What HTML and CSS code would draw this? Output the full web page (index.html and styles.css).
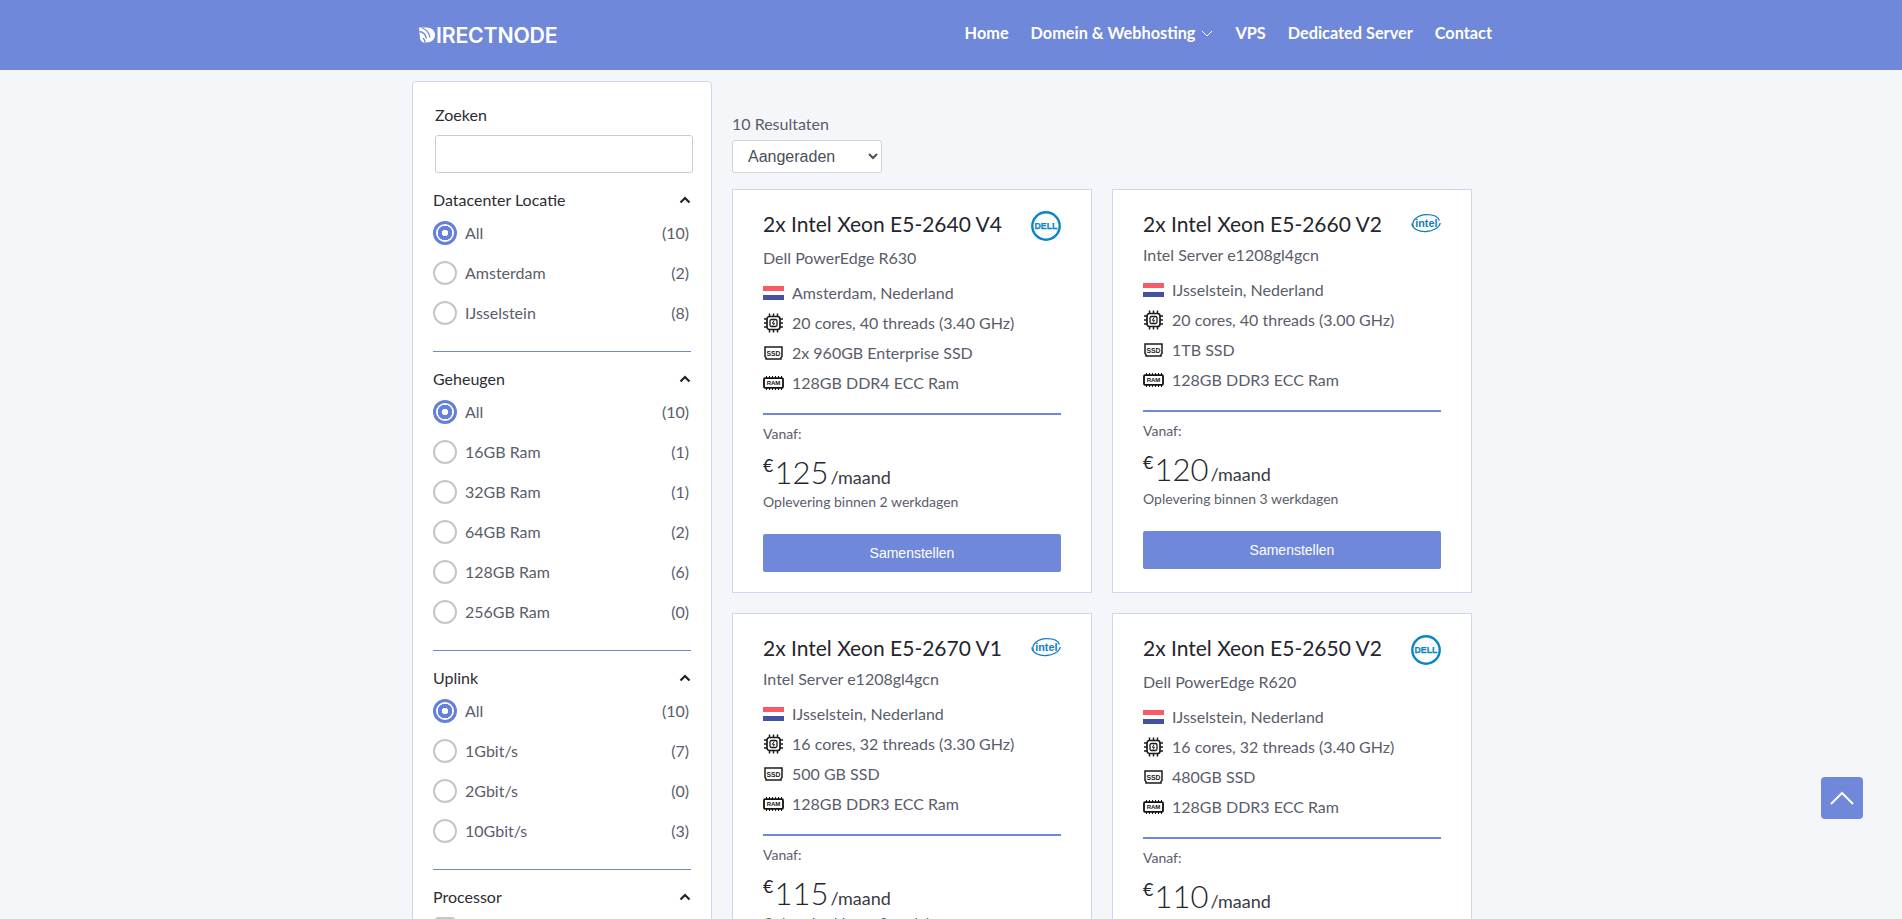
FILE: index.html
```html
<!DOCTYPE html>
<html lang="en">
<head>
    <meta charset="UTF-8">
    <meta name="viewport" content="width=device-width, initial-scale=1.0">
    <title>DirectNode - Dedicated Server</title>
    <link rel="stylesheet" href="styles.css">
</head>
<body>
    <svg class="sprites" width="0" height="0">
        <symbol id="chip" viewBox="0 0 20 20">
            <rect x="3.500" y="3.500" width="13" height="13" rx="2.500" fill="none" stroke="#1c1c1c" stroke-width="1.700"/>
            <rect x="6.500" y="6.500" width="7" height="7" rx="1.500" fill="none" stroke="#1c1c1c" stroke-width="1.300"/>
            <path d="M10.600 7.500 8.800 10.300h2.200l-1.400 2.200" fill="none" stroke="#1c1c1c" stroke-width="1"/>
            <path d="M6 .5v3M10 .5v3M14 .5v3M6 16.500v3M10 16.500v3M14 16.500v3M.5 6h3M.5 10h3M.5 14h3M16.500 6h3M16.500 10h3M16.500 14h3" stroke="#1c1c1c" stroke-width="1.500"/>
        </symbol>
        <symbol id="flag" viewBox="0 0 21 14">
            <rect width="21" height="5" fill="#f95a67"/>
            <rect y="5" width="21" height="4" fill="#fff"/>
            <rect y="9" width="21" height="5" fill="#46519f"/>
        </symbol>
    </svg>

    <div class="page">
        <header class="topbar">
            <div class="topbar-inner">
                <a class="logo" href="#">
                    <svg class="logo-mark" viewBox="0 0 16 16">
                        <path d="M0 .5h7.500C12.500.5 16 3.600 16 8s-3.500 7.500-8.500 7.500H5C2.500 15.500 1.500 13 1 11z" fill="#fff"/>
                        <path d="M.5 4.500c3 .5 6 3 7 7M3 1c3.500 1 7 4 8 9.500M4 11c1 1 1.800 2.500 2.200 4.500" stroke="#7088d9" stroke-width="1.300" fill="none"/>
                    </svg>
                    <span>IRECTNODE</span>
                </a>
                <nav class="mainnav">
                    <a href="#">Home</a>
                    <a href="#">Domein &amp; Webhosting
                        <svg class="caret" viewBox="0 0 12 7"><path d="M1 1l5 5 5-5" fill="none" stroke="#fff" stroke-width="1"/></svg>
                    </a>
                    <a href="#">VPS</a>
                    <a href="#">Dedicated Server</a>
                    <a href="#">Contact</a>
                </nav>
            </div>
        </header>

        <main class="layout">
            <aside class="filters">
                <div class="search">
                    <label for="zoek">Zoeken</label>
                    <input id="zoek" type="text">
                </div>

                <section class="filter">
                    <div class="filter-head"><h4>Datacenter Locatie</h4><svg class="chev" viewBox="0 0 12 8"><path d="M1.500 6.500 6 2l4.500 4.500" fill="none" stroke="#222" stroke-width="2.200"/></svg></div>
                    <div class="opt on"><span class="radio"></span><span class="opt-name">All</span><span class="opt-count">(10)</span></div>
                    <div class="opt"><span class="radio"></span><span class="opt-name">Amsterdam</span><span class="opt-count">(2)</span></div>
                    <div class="opt"><span class="radio"></span><span class="opt-name">IJsselstein</span><span class="opt-count">(8)</span></div>
                </section>

                <section class="filter">
                    <div class="filter-head"><h4>Geheugen</h4><svg class="chev" viewBox="0 0 12 8"><path d="M1.500 6.500 6 2l4.500 4.500" fill="none" stroke="#222" stroke-width="2.200"/></svg></div>
                    <div class="opt on"><span class="radio"></span><span class="opt-name">All</span><span class="opt-count">(10)</span></div>
                    <div class="opt"><span class="radio"></span><span class="opt-name">16GB Ram</span><span class="opt-count">(1)</span></div>
                    <div class="opt"><span class="radio"></span><span class="opt-name">32GB Ram</span><span class="opt-count">(1)</span></div>
                    <div class="opt"><span class="radio"></span><span class="opt-name">64GB Ram</span><span class="opt-count">(2)</span></div>
                    <div class="opt"><span class="radio"></span><span class="opt-name">128GB Ram</span><span class="opt-count">(6)</span></div>
                    <div class="opt"><span class="radio"></span><span class="opt-name">256GB Ram</span><span class="opt-count">(0)</span></div>
                </section>

                <section class="filter">
                    <div class="filter-head"><h4>Uplink</h4><svg class="chev" viewBox="0 0 12 8"><path d="M1.500 6.500 6 2l4.500 4.500" fill="none" stroke="#222" stroke-width="2.200"/></svg></div>
                    <div class="opt on"><span class="radio"></span><span class="opt-name">All</span><span class="opt-count">(10)</span></div>
                    <div class="opt"><span class="radio"></span><span class="opt-name">1Gbit/s</span><span class="opt-count">(7)</span></div>
                    <div class="opt"><span class="radio"></span><span class="opt-name">2Gbit/s</span><span class="opt-count">(0)</span></div>
                    <div class="opt"><span class="radio"></span><span class="opt-name">10Gbit/s</span><span class="opt-count">(3)</span></div>
                </section>

                <section class="filter">
                    <div class="filter-head"><h4>Processor</h4><svg class="chev" viewBox="0 0 12 8"><path d="M1.500 6.500 6 2l4.500 4.500" fill="none" stroke="#222" stroke-width="2.200"/></svg></div>
                    <div class="opt"><span class="check"></span></div>
                </section>
            </aside>

            <section class="results">
                <p class="count">10 Resultaten</p>
                <select class="sort"><option>Aangeraden</option></select>

                <div class="cards">
                    <article class="card">
                        <div class="card-head">
                            <h3>2x Intel Xeon E5-2640 V4</h3>
                            <svg class="brand dell" viewBox="0 0 30 30"><circle cx="15" cy="15" r="13.700" fill="none" stroke="#0a85c7" stroke-width="2.400"/><text x="15" y="18.200" text-anchor="middle" class="brand-text dell-text">DELL</text></svg>
                        </div>
                        <p class="model">Dell PowerEdge R630</p>
                        <ul class="specs">
                            <li><svg class="ic"><use href="#flag"/></svg>Amsterdam, Nederland</li>
                            <li><svg class="ic chip"><use href="#chip"/></svg>20 cores, 40 threads (3.40 GHz)</li>
                            <li><svg class="ic" viewBox="0 0 21 14"><path d="M2 1h17v9.500l-1 1V13H3v-1.500l-1-1z" fill="none" stroke="#1c1c1c" stroke-width="1.500"/><text x="10.500" y="9.500" text-anchor="middle" class="ssd-text">SSD</text></svg>2x 960GB Enterprise SSD</li>
                            <li><svg class="ic" viewBox="0 0 21 14"><rect x="1" y="2.200" width="19" height="9.600" rx="1" fill="none" stroke="#111" stroke-width="1.800"/><path d="M3.500 0v2M6.500 0v2M9.500 0v2M12.500 0v2M15.500 0v2M18.500 0v2M3.500 12v2M6.500 12v2M9.500 12v2M12.500 12v2M15.500 12v2M18.500 12v2" stroke="#111" stroke-width="1"/><text x="10.500" y="9.200" text-anchor="middle" class="ram-text">RAM</text></svg>128GB DDR4 ECC Ram</li>
                        </ul>
                        <div class="from">Vanaf:</div>
                        <div class="price"><sup>€</sup><b>125</b> <span>/maand</span></div>
                        <div class="delivery">Oplevering binnen 2 werkdagen</div>
                        <a class="btn" href="#">Samenstellen</a>
                    </article>

                    <article class="card">
                        <div class="card-head">
                            <h3>2x Intel Xeon E5-2660 V2</h3>
                            <svg class="brand intel" viewBox="0 0 30 20"><path d="M2.500 14C-.5 7.500 7 1.800 15.500 1.600c6.500-.1 11.500 2 13 5.900" fill="none" stroke="#0f7cc4" stroke-width="1.300"/><path d="M.8 10.500c.7 5.500 7.200 8.400 14.700 8 6-.3 12.800-3.400 13.700-8.500" fill="none" stroke="#0f7cc4" stroke-width="1.300"/><text x="15.300" y="13.800" text-anchor="middle" class="brand-text intel-text">intel</text></svg>
                        </div>
                        <p class="model">Intel Server e1208gl4gcn</p>
                        <ul class="specs">
                            <li><svg class="ic"><use href="#flag"/></svg>IJsselstein, Nederland</li>
                            <li><svg class="ic chip"><use href="#chip"/></svg>20 cores, 40 threads (3.00 GHz)</li>
                            <li><svg class="ic" viewBox="0 0 21 14"><path d="M2 1h17v9.500l-1 1V13H3v-1.500l-1-1z" fill="none" stroke="#1c1c1c" stroke-width="1.500"/><text x="10.500" y="9.500" text-anchor="middle" class="ssd-text">SSD</text></svg>1TB SSD</li>
                            <li><svg class="ic" viewBox="0 0 21 14"><rect x="1" y="2.200" width="19" height="9.600" rx="1" fill="none" stroke="#111" stroke-width="1.800"/><path d="M3.500 0v2M6.500 0v2M9.500 0v2M12.500 0v2M15.500 0v2M18.500 0v2M3.500 12v2M6.500 12v2M9.500 12v2M12.500 12v2M15.500 12v2M18.500 12v2" stroke="#111" stroke-width="1"/><text x="10.500" y="9.200" text-anchor="middle" class="ram-text">RAM</text></svg>128GB DDR3 ECC Ram</li>
                        </ul>
                        <div class="from">Vanaf:</div>
                        <div class="price"><sup>€</sup><b>120</b> <span>/maand</span></div>
                        <div class="delivery">Oplevering binnen 3 werkdagen</div>
                        <a class="btn" href="#">Samenstellen</a>
                    </article>

                    <article class="card">
                        <div class="card-head">
                            <h3>2x Intel Xeon E5-2670 V1</h3>
                            <svg class="brand intel" viewBox="0 0 30 20"><path d="M2.500 14C-.5 7.500 7 1.800 15.500 1.600c6.500-.1 11.500 2 13 5.900" fill="none" stroke="#0f7cc4" stroke-width="1.300"/><path d="M.8 10.500c.7 5.500 7.200 8.400 14.700 8 6-.3 12.800-3.400 13.700-8.500" fill="none" stroke="#0f7cc4" stroke-width="1.300"/><text x="15.300" y="13.800" text-anchor="middle" class="brand-text intel-text">intel</text></svg>
                        </div>
                        <p class="model">Intel Server e1208gl4gcn</p>
                        <ul class="specs">
                            <li><svg class="ic"><use href="#flag"/></svg>IJsselstein, Nederland</li>
                            <li><svg class="ic chip"><use href="#chip"/></svg>16 cores, 32 threads (3.30 GHz)</li>
                            <li><svg class="ic" viewBox="0 0 21 14"><path d="M2 1h17v9.500l-1 1V13H3v-1.500l-1-1z" fill="none" stroke="#1c1c1c" stroke-width="1.500"/><text x="10.500" y="9.500" text-anchor="middle" class="ssd-text">SSD</text></svg>500 GB SSD</li>
                            <li><svg class="ic" viewBox="0 0 21 14"><rect x="1" y="2.200" width="19" height="9.600" rx="1" fill="none" stroke="#111" stroke-width="1.800"/><path d="M3.500 0v2M6.500 0v2M9.500 0v2M12.500 0v2M15.500 0v2M18.500 0v2M3.500 12v2M6.500 12v2M9.500 12v2M12.500 12v2M15.500 12v2M18.500 12v2" stroke="#111" stroke-width="1"/><text x="10.500" y="9.200" text-anchor="middle" class="ram-text">RAM</text></svg>128GB DDR3 ECC Ram</li>
                        </ul>
                        <div class="from">Vanaf:</div>
                        <div class="price"><sup>€</sup><b>115</b> <span>/maand</span></div>
                        <div class="delivery">Oplevering binnen 2 werkdagen</div>
                        <a class="btn" href="#">Samenstellen</a>
                    </article>

                    <article class="card">
                        <div class="card-head">
                            <h3>2x Intel Xeon E5-2650 V2</h3>
                            <svg class="brand dell" viewBox="0 0 30 30"><circle cx="15" cy="15" r="13.700" fill="none" stroke="#0a85c7" stroke-width="2.400"/><text x="15" y="18.200" text-anchor="middle" class="brand-text dell-text">DELL</text></svg>
                        </div>
                        <p class="model">Dell PowerEdge R620</p>
                        <ul class="specs">
                            <li><svg class="ic"><use href="#flag"/></svg>IJsselstein, Nederland</li>
                            <li><svg class="ic chip"><use href="#chip"/></svg>16 cores, 32 threads (3.40 GHz)</li>
                            <li><svg class="ic" viewBox="0 0 21 14"><path d="M2 1h17v9.500l-1 1V13H3v-1.500l-1-1z" fill="none" stroke="#1c1c1c" stroke-width="1.500"/><text x="10.500" y="9.500" text-anchor="middle" class="ssd-text">SSD</text></svg>480GB SSD</li>
                            <li><svg class="ic" viewBox="0 0 21 14"><rect x="1" y="2.200" width="19" height="9.600" rx="1" fill="none" stroke="#111" stroke-width="1.800"/><path d="M3.500 0v2M6.500 0v2M9.500 0v2M12.500 0v2M15.500 0v2M18.500 0v2M3.500 12v2M6.500 12v2M9.500 12v2M12.500 12v2M15.500 12v2M18.500 12v2" stroke="#111" stroke-width="1"/><text x="10.500" y="9.200" text-anchor="middle" class="ram-text">RAM</text></svg>128GB DDR3 ECC Ram</li>
                        </ul>
                        <div class="from">Vanaf:</div>
                        <div class="price"><sup>€</sup><b>110</b> <span>/maand</span></div>
                        <div class="delivery">Oplevering binnen 2 werkdagen</div>
                        <a class="btn" href="#">Samenstellen</a>
                    </article>
                </div>
            </section>
        </main>

        <a class="to-top" href="#">
            <svg viewBox="0 0 26 16"><path d="M2 14 13 3l11 11" fill="none" stroke="#fff" stroke-width="2"/></svg>
        </a>
    </div>
</body>
</html>
```

FILE: styles.css
```css
* {
    box-sizing: border-box;
}
html, body {
    margin: 0;
    padding: 0;
}
body {
    font-family: Lato, "Open Sans", sans-serif;
    font-size: 16px;
    background-color: #f4f6f9;
    color: #5a5d6b;
}
.sprites {
    position: absolute;
}
.page {
    height: 100vh;
    overflow: hidden;
}
.topbar {
    background: #7088d9;
    height: 70px;
}
.topbar-inner {
    width: 1082px;
    margin: 0 auto;
    height: 100%;
    display: flex;
    align-items: center;
    justify-content: space-between;
    padding-left: 2px;
}
.logo {
    display: flex;
    align-items: center;
    color: #fff;
    text-decoration: none;
    font-family: Inter, sans-serif;
    font-weight: 600;
    font-size: 21.3px;
    letter-spacing: -0.2px;
    margin: 0 0 1px 7px;
}
.logo-mark {
    width: 16px;
    height: 16px;
    margin-right: 1px;
}
.mainnav {
    display: flex;
    align-items: center;
    gap: 22px;
    margin-bottom: 6px;
}
.mainnav a {
    color: #fff;
    text-decoration: none;
    font-size: 16.3px;
    font-weight: 700;
    white-space: nowrap;
}
.caret {
    width: 12px;
    height: 7px;
    margin-left: 2px;
    vertical-align: 2px;
}
.layout {
    width: 1082px;
    margin: 11px auto 0;
    padding-left: 2px;
    display: flex;
    gap: 20px;
    align-items: flex-start;
}
.filters {
    width: 300px;
    flex: none;
    background: #fff;
    border: 1px solid #cfd7f1;
    border-radius: 4px;
    padding: 23px 20px 20px;
}
.search label {
    display: block;
    color: #2d2d35;
    font-size: 16px;
    margin-left: 2px;
    line-height: 20px;
}
.search input {
    display: block;
    width: 258px;
    height: 38px;
    margin: 10px 0 0 2px;
    border: 1px solid #c9cbd0;
    border-radius: 3px;
    background: #fff;
}
.filter {
    padding-bottom: 18px;
    border-bottom: 1px solid #7088d9;
    margin-bottom: 17px;
}
.search + .filter {
    margin-top: 17px;
}
.filter:last-child {
    border-bottom: none;
}
.filter-head {
    display: flex;
    align-items: center;
    justify-content: space-between;
    height: 20px;
    margin-bottom: 3px;
}
.filter-head h4 {
    margin: 0 0 2px;
    font-size: 16px;
    font-weight: 400;
    color: #2d2d35;
}
.chev {
    width: 12px;
    height: 8px;
}
.opt {
    display: flex;
    align-items: center;
    height: 40px;
    padding-right: 2px;
}
.opt-name {
    flex: 1;
    margin: 0 0 2px 8px;
}
.opt-count {
    margin-bottom: 2px;
}
.radio {
    width: 24px;
    height: 24px;
    border: 2px solid #c4c6c9;
    border-radius: 50%;
    background: #fff;
    flex: none;
}
.opt.on .radio {
    border: 3px solid #6480dc;
    background: radial-gradient(circle, #fff 0 3px, #6480dc 3.5px 7px, #fff 7.5px);
}
.check {
    width: 20px;
    height: 20px;
    border: 2px solid #c4c6c9;
    border-radius: 3px;
    margin: 7px 0 0 2px;
    align-self: flex-start;
}
.results {
    flex: 1;
    min-width: 0;
    padding-top: 33px;
}
.count {
    margin: 0;
    line-height: 20px;
}
.sort {
    display: block;
    width: 150px;
    height: 33px;
    margin-top: 6px;
    padding-left: 11px;
    font-family: "Liberation Sans", sans-serif;
    font-size: 16px;
    color: #495057;
    background: #fff;
    border: 1px solid #ced4da;
    border-radius: 3px;
}
.cards {
    display: grid;
    grid-template-columns: 360px 360px;
    gap: 20px;
    margin-top: 16px;
}
.card {
    background: #fff;
    border: 1px solid #cfd7f1;
    padding: 21px 30px 20px;
}
.card-head {
    display: flex;
    align-items: flex-start;
    justify-content: space-between;
}
.card-head h3 {
    margin: 0;
    padding-bottom: 2px;
    font-size: 21px;
    line-height: 25px;
    font-weight: 400;
    color: #25252d;
}
.brand {
    flex: none;
}
.brand.dell {
    width: 30px;
    height: 30px;
}
.brand.intel {
    width: 30px;
    height: 20px;
    margin-top: 2px;
    overflow: visible;
}
.brand-text {
    font-family: "Liberation Sans", sans-serif;
    font-weight: 700;
    fill: #0a85c7;
}
.dell-text {
    font-size: 8.8px;
    stroke: #0a85c7;
    stroke-width: 0.25px;
}
.intel-text {
    font-size: 10.8px;
    fill: #0f7cc4;
}
.ssd-text {
    font-family: "Liberation Sans", sans-serif;
    font-size: 6.8px;
    font-weight: 700;
    fill: #1c1c1c;
}
.ram-text {
    font-family: "Liberation Sans", sans-serif;
    font-size: 6px;
    font-weight: 700;
    fill: #111;
}
.model {
    margin: 8px 0 0;
    padding-bottom: 2px;
    line-height: 18px;
}
.specs {
    list-style: none;
    margin: 9px 0 0;
    padding: 0 0 15px;
    border-bottom: 2px solid #7088d9;
}
.specs li {
    display: flex;
    align-items: center;
    height: 30px;
    padding-bottom: 2px;
}
.ic {
    width: 21px;
    height: 14px;
    margin: 2px 8px 0 0;
    flex: none;
    overflow: visible;
}
.ic.chip {
    height: 20px;
}
.from {
    margin-top: 9px;
    font-size: 14px;
    line-height: 20px;
}
.price {
    margin-top: 16px;
    color: #25252d;
    line-height: 24px;
    display: flex;
    align-items: baseline;
    gap: 3px;
}
.price sup {
    font-size: 18px;
    line-height: 1;
    align-self: flex-start;
    margin-top: -4px;
    margin-right: -2px;
}
.price b {
    font-weight: 300;
    font-size: 31px;
}
.price span {
    font-size: 18px;
    margin-left: -1px;
    color: #3a3a44;
}
.delivery {
    margin-top: 3px;
    font-size: 14px;
    line-height: 20px;
}
.btn {
    display: block;
    margin-top: 22px;
    height: 38px;
    line-height: 38px;
    text-align: center;
    background: #7088d9;
    color: #fff;
    text-decoration: none;
    border-radius: 2px;
    font-family: "Liberation Sans", sans-serif;
    font-size: 14px;
}
.to-top {
    position: fixed;
    left: 1821px;
    top: 777px;
    width: 42px;
    height: 42px;
    background: #7088d9;
    border-radius: 4px;
    display: flex;
    align-items: center;
    justify-content: center;
}
.to-top svg {
    width: 26px;
    height: 16px;
}
```
